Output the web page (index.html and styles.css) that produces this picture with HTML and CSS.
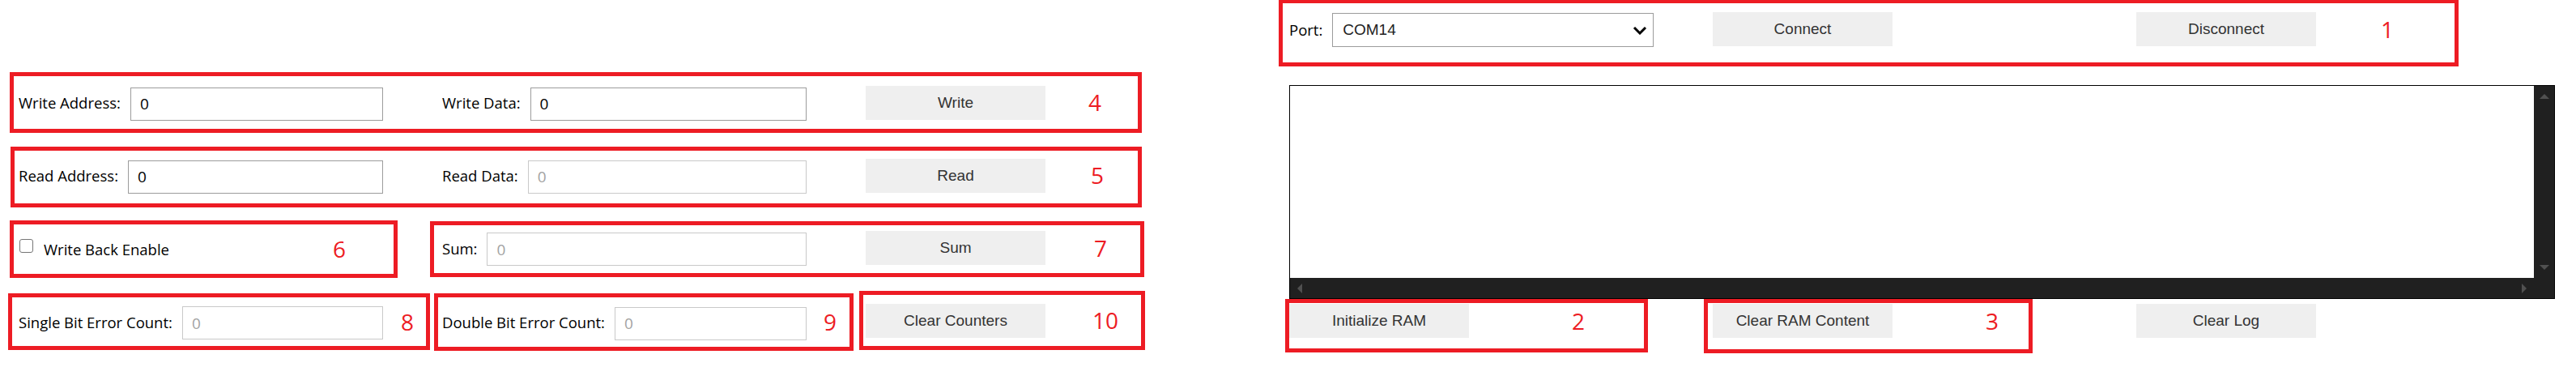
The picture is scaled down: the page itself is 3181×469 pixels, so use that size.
FILE: index.html
```html
<!DOCTYPE html>
<html lang="en">
<head>
<meta charset="utf-8">
<title>RAM Tester</title>
<link rel="stylesheet" href="styles.css">
</head>
<body>
<div class="page">
  <div class="left">
    <div class="row">
      <div class="box b4">
        <div class="cell"><label class="lbl">Write Address:</label><input class="field" type="text" value="0"></div>
        <div class="cell gap"><label class="lbl">Write Data:</label><input class="field" type="text" value="0"></div>
        <button class="btn gap">Write</button>
        <span class="num n4">4</span>
      </div>
    </div>
    <div class="row ra">
      <div class="box b5">
        <div class="cell"><label class="lbl">Read Address:</label><input class="field" type="text" value="0"></div>
        <div class="cell gap"><label class="lbl">Read Data:</label><input class="field" type="text" value="0" disabled></div>
        <button class="btn gap">Read</button>
        <span class="num n5">5</span>
      </div>
    </div>
    <div class="row rc">
      <div class="box b6">
        <input class="check" type="checkbox">
        <label class="lbl chk-lbl">Write Back Enable</label>
        <span class="num n6">6</span>
      </div>
      <div class="box b7">
        <div class="cell"><label class="lbl">Sum:</label><input class="field" type="text" value="0" disabled></div>
        <button class="btn gap">Sum</button>
        <span class="num n7">7</span>
      </div>
    </div>
    <div class="row rd">
      <div class="box b8">
        <div class="cell"><label class="lbl">Single Bit Error Count:</label><input class="field" type="text" value="0" disabled></div>
        <span class="num n8">8</span>
      </div>
      <div class="box b9">
        <div class="cell"><label class="lbl">Double Bit Error Count:</label><input class="field" type="text" value="0" disabled></div>
        <span class="num n9">9</span>
      </div>
      <div class="box b10">
        <button class="btn">Clear Counters</button>
        <span class="num n10">10</span>
      </div>
    </div>
  </div>

  <div class="right">
    <div class="box b1">
      <div class="cell"><label class="lbl">Port:</label>
        <div class="select"><span>COM14</span>
          <svg class="chev" width="18" height="11" viewBox="0 0 18 11"><polyline points="2,2 9,9 16,2" fill="none" stroke="#000" stroke-width="3"/></svg>
        </div>
      </div>
      <button class="btn gap">Connect</button>
      <button class="btn disc">Disconnect</button>
      <span class="num n1">1</span>
    </div>

    <div class="log">
      <div class="log-body"></div>
      <div class="vbar"><span class="arr up"></span><span class="arr down"></span></div>
      <div class="hbar"><span class="arr lt"></span><span class="arr rt"></span></div>
      <div class="corner"></div>
    </div>

    <div class="row bottom">
      <div class="box b2">
        <button class="btn">Initialize RAM</button>
        <span class="num n2">2</span>
      </div>
      <div class="box b3">
        <button class="btn">Clear RAM Content</button>
        <span class="num n3">3</span>
      </div>
      <button class="btn clog">Clear Log</button>
    </div>
  </div>
</div>
</body>
</html>
```

FILE: styles.css
```css
* { box-sizing: border-box; }

body {
  margin: 0;
  background: #ffffff;
  font-family: "Open Sans", "Noto Sans", sans-serif;
  color: #000;
}

.page {
  display: flex;
  align-items: flex-start;
  width: 3181px;
}

/* ---------- left panel ---------- */
.left {
  width: 1414px;
  padding: 89px 0 0 10px;
  display: flex;
  flex-direction: column;
  flex: none;
}

.row {
  display: flex;
  align-items: flex-start;
}

.ra { margin-top: 17px; }
.rc { margin-top: 16px; }
.rd { margin-top: 16px; }

.box {
  border: 5px solid #ed1c24;
  display: flex;
  align-items: center;
  flex: none;
}

.cell {
  width: 450px;
  display: flex;
  align-items: center;
  gap: 12px;
  flex: none;
}

.gap { margin-left: 73px; }

.lbl {
  font-size: 18.5px;
  white-space: nowrap;
  flex: none;
}

.field {
  flex: 1;
  min-width: 0;
  height: 41px;
  margin-top: 3px;
  border: 1px solid #9c9c9c;
  border-radius: 0;
  padding: 0 11px;
  font-family: "Open Sans", "Noto Sans", sans-serif;
  font-size: 19px;
  color: #000;
  background: #fff;
  outline: none;
}

.field:disabled {
  border-color: #c9c9c9;
  color: #a3a3a3;
  background: #fff;
}

.btn {
  width: 222px;
  height: 42px;
  border: none;
  border-radius: 0;
  background: #efefef;
  font-family: "Liberation Sans", Arial, sans-serif;
  font-size: 19px;
  color: #333;
  padding: 0;
  flex: none;
}

.num {
  font-size: 28px;
  line-height: 1.3;
  color: #ed1c24;
  flex: none;
}

.b4 { width: 1398px; height: 75px; margin-left: 2px; padding-left: 6px; }
.b5 { width: 1397px; height: 75px; margin-left: 3px; padding-left: 5px; padding-bottom: 4px; }
.b6 { width: 479px; height: 71px; margin-left: 2px; padding-left: 7px; padding-right: 59px; }
.b7 { width: 882px; height: 69px; margin-left: 40px; margin-top: 1px; padding-left: 10px; padding-bottom: 3px; }
.b8 { width: 521px; height: 70px; margin-top: 3px; padding-left: 8px; }
.b9 { width: 518px; height: 71px; margin-left: 5px; margin-top: 3px; padding-left: 5px; }
.b10 { width: 353px; height: 73px; margin-left: 7px; padding-left: 3px; }

.n4 { margin-left: 53px; }
.n5 { margin-left: 56px; }
.n6 { margin-left: auto; }
.n7 { margin-left: 60px; }
.n8 { margin-left: 22px; }
.n9 { margin-left: 21px; }
.n10 { margin-left: 58px; }

.check {
  appearance: none;
  -webkit-appearance: none;
  width: 17px;
  height: 17px;
  margin: 0 0 8px 0;
  border: 1.5px solid #767676;
  border-radius: 3px;
  background: #fff;
  flex: none;
}

.chk-lbl { margin-left: 13px; }

/* ---------- right panel ---------- */
.right {
  margin-left: 165px;
  display: flex;
  flex-direction: column;
  flex: none;
}

.b1 {
  width: 1457px;
  height: 82px;
  border-top-width: 4px;
  padding: 0 0 9px 8px;
}

.select {
  flex: 1;
  height: 42px;
  margin-top: 2px;
  border: 1px solid #9c9c9c;
  display: flex;
  align-items: center;
  justify-content: space-between;
  padding: 0 7px 0 12px;
  font-family: "Liberation Sans", Arial, sans-serif;
  font-size: 19px;
  color: #222;
  background: #fff;
}

.chev { display: block; }

.disc { margin-left: 301px; }
.n1 { margin-left: 80px; }

.log {
  margin: 23px 0 0 13px;
  width: 1563px;
  height: 264px;
  border: 1px solid #000;
  display: grid;
  grid-template-columns: 1fr 25px;
  grid-template-rows: 1fr 25px;
}

.log-body { background: #fff; }

.vbar {
  background: #202020;
  display: flex;
  flex-direction: column;
  justify-content: space-between;
  align-items: center;
  padding: 10px 0;
}

.hbar {
  background: #202020;
  display: flex;
  justify-content: space-between;
  align-items: center;
  padding: 0 9px;
}

.corner { background: #202020; }

.arr { display: block; width: 0; height: 0; }
.up { border-left: 6px solid transparent; border-right: 6px solid transparent; border-bottom: 6px solid #505050; }
.down { border-left: 6px solid transparent; border-right: 6px solid transparent; border-top: 6px solid #505050; }
.lt { border-top: 6px solid transparent; border-bottom: 6px solid transparent; border-right: 6px solid #505050; }
.rt { border-top: 6px solid transparent; border-bottom: 6px solid transparent; border-left: 6px solid #505050; }

.bottom { margin-left: 8px; }

.b2 { width: 448px; height: 66px; padding-bottom: 12px; }
.b3 { width: 406px; height: 67px; margin-left: 69px; padding-left: 6px; padding-bottom: 13px; }
.n2 { margin-left: 127px; }
.n3 { margin-left: 115px; }

.clog { margin-left: 128px; margin-top: 6px; }
```
